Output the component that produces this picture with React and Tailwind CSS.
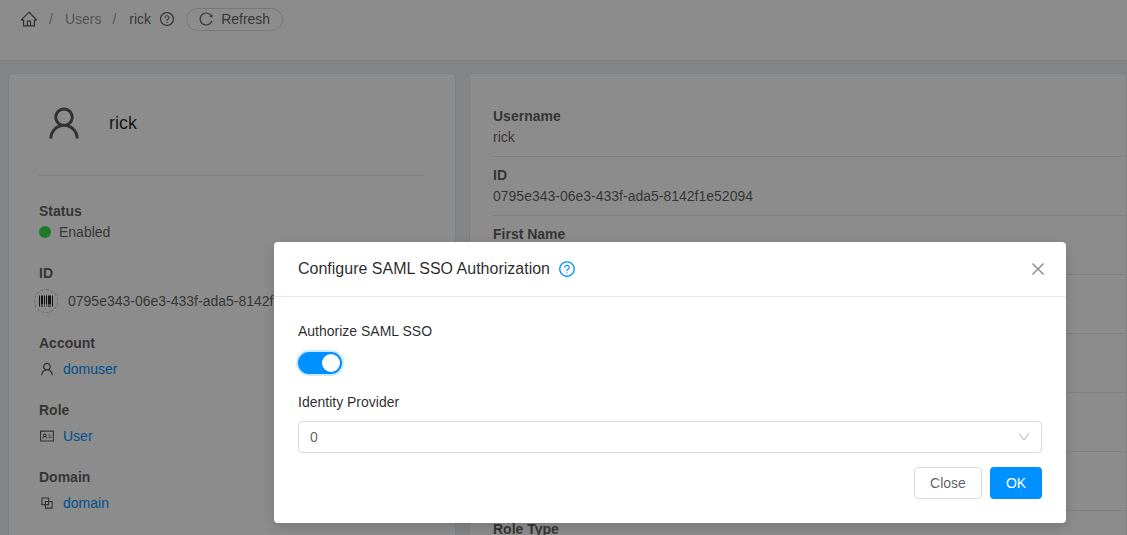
import React from 'react'
import {
  AiOutlineHome,
  AiOutlineQuestionCircle,
  AiOutlineReload,
  AiOutlineUser,
  AiOutlineBarcode,
  AiOutlineIdcard,
  AiOutlineBlock,
  AiOutlineClose,
  AiOutlineDown,
} from 'react-icons/ai'

const detailRows = [
  { label: 'Username', value: 'rick' },
  { label: 'ID', value: '0795e343-06e3-433f-ada5-8142f1e52094' },
  { label: 'First Name', value: '' },
  { label: '', value: '' },
  { label: '', value: '' },
  { label: '', value: '' },
  { label: '', value: '' },
  { label: 'Role Type', value: '' },
]

function LinkItem({ label, icon: Icon, text }) {
  return (
    <div className="h-[67px]">
      <div className="font-bold leading-[22px] text-black/65">{label}</div>
      <div className="flex items-center gap-[8px] mt-[4px] leading-[22px]">
        <Icon className="w-[16px] h-[16px] text-black/65 shrink-0" />
        <span className="text-[#0091ff]">{text}</span>
      </div>
    </div>
  )
}

function LeftCard() {
  return (
    <div className="w-[448px] shrink-0 bg-white border border-[#e8e8e8] rounded-[2px] pl-[30px] pr-[31px] overflow-hidden">
      <div className="flex items-center h-[102px] border-b border-[#e8e8e8]">
        <AiOutlineUser className="w-[40px] h-[40px] ml-[5px] -mt-[4px] text-black/65 shrink-0" />
        <span className="ml-[25px] -mt-[3px] text-[18px] text-black/85">rick</span>
      </div>
      <div className="h-[62px] pt-[24px] box-content">
        <div className="font-bold leading-[22px] text-black/65">Status</div>
        <div className="flex items-center gap-[8px] mt-[-1px] leading-[22px] text-black/65">
          <span className="w-[12px] h-[12px] rounded-full bg-[#36e04a]" />
          <span>Enabled</span>
        </div>
      </div>
      <div className="h-[70px]">
        <div className="font-bold leading-[22px] text-black/65">ID</div>
        <div className="flex items-center mt-[5px] leading-[22px] text-black/65 whitespace-nowrap -ml-[5px]">
          <span className="w-[24px] h-[24px] rounded-full border border-dashed border-[#bfbfbf] flex items-center justify-center shrink-0">
            <AiOutlineBarcode className="w-[16px] h-[16px] text-black/85" />
          </span>
          <span className="ml-[10px]">0795e343-06e3-433f-ada5-8142f1e52094</span>
        </div>
      </div>
      <LinkItem label="Account" icon={AiOutlineUser} text="domuser" />
      <LinkItem label="Role" icon={AiOutlineIdcard} text="User" />
      <LinkItem label="Domain" icon={AiOutlineBlock} text="domain" />
    </div>
  )
}

function RightCard() {
  return (
    <div className="flex-1 bg-white border border-[#e8e8e8] rounded-[2px] pt-[24px] pl-[23px]">
      {detailRows.map((row, i) => (
        <div key={i} className="h-[59px] pt-[7px] border-b border-[#e8e8e8]">
          <div className="font-bold leading-[22px] text-black/65">{row.label}</div>
          <div className="leading-[20px] text-black/65">{row.value}</div>
        </div>
      ))}
    </div>
  )
}

function SamlModal() {
  return (
    <div className="absolute left-[274px] top-[242px] w-[792px] h-[281px] bg-white rounded-[4px] shadow-[0_4px_12px_rgba(0,0,0,0.15)]">
      <div className="flex items-center h-[55px] px-[24px] border-b border-[#e8e8e8]">
        <span className="text-[16px] text-black/85">Configure SAML SSO Authorization</span>
        <AiOutlineQuestionCircle className="w-[18px] h-[18px] ml-[8px] text-[#0091ff]" />
        <AiOutlineClose className="w-[18px] h-[18px] ml-auto -mr-[5px] text-black/45" />
      </div>
      <div className="px-[24px] pt-[23px]">
        <div className="leading-[22px] text-black/85">Authorize SAML SSO</div>
        <div className="mt-[10px] w-[44px] h-[22px] rounded-full bg-[#0091ff] shadow-[0_0_0_2px_rgba(0,145,255,0.2)] flex items-center justify-end pr-[2px]">
          <span className="w-[18px] h-[18px] rounded-full bg-white" />
        </div>
        <div className="mt-[17px] leading-[22px] text-black/85">Identity Provider</div>
        <div className="mt-[8px] h-[32px] border border-[#d9d9d9] rounded-[4px] flex items-center pl-[11px] pr-[10px] text-black/65">
          <span>0</span>
          <AiOutlineDown className="ml-auto w-[14px] h-[14px] text-black/25" />
        </div>
        <div className="flex justify-end gap-[8px] mt-[14px]">
          <button className="w-[68px] h-[32px] border border-[#d9d9d9] rounded-[4px] bg-white text-black/65">Close</button>
          <button className="w-[52px] h-[32px] rounded-[4px] bg-[#0091ff] text-white">OK</button>
        </div>
      </div>
    </div>
  )
}

export default function App() {
  return (
    <div
      className="relative w-[1127px] h-[535px] overflow-hidden bg-[#f0f2f5] text-[14px]"
      style={{ fontFamily: '"Liberation Sans", Arial, sans-serif' }}
    >
      <div className="h-[61px] bg-white border-b border-[#e8e8e8] pl-[20px] pt-[7px]">
        <div className="flex items-center h-[24px]">
          <AiOutlineHome className="w-[18px] h-[18px] text-black/65" />
          <span className="ml-[11px] text-black/45">/</span>
          <span className="ml-[12px] text-black/45">Users</span>
          <span className="ml-[11px] text-black/45">/</span>
          <span className="ml-[13px] text-black/65">rick</span>
          <AiOutlineQuestionCircle className="ml-[8px] w-[16px] h-[16px] text-black/65" />
          <div className="ml-[11px] w-[97px] h-[23px] border border-[#d9d9d9] rounded-full flex items-center pl-[11px] text-black/65">
            <AiOutlineReload className="w-[16px] h-[16px]" />
            <span className="ml-[7px]">Refresh</span>
          </div>
        </div>
      </div>
      <div className="flex gap-[13px] pl-[8px] pt-[12px] h-[600px]">
        <LeftCard />
        <RightCard />
      </div>
      <div className="absolute inset-0 bg-black/45" />
      <SamlModal />
    </div>
  )
}
